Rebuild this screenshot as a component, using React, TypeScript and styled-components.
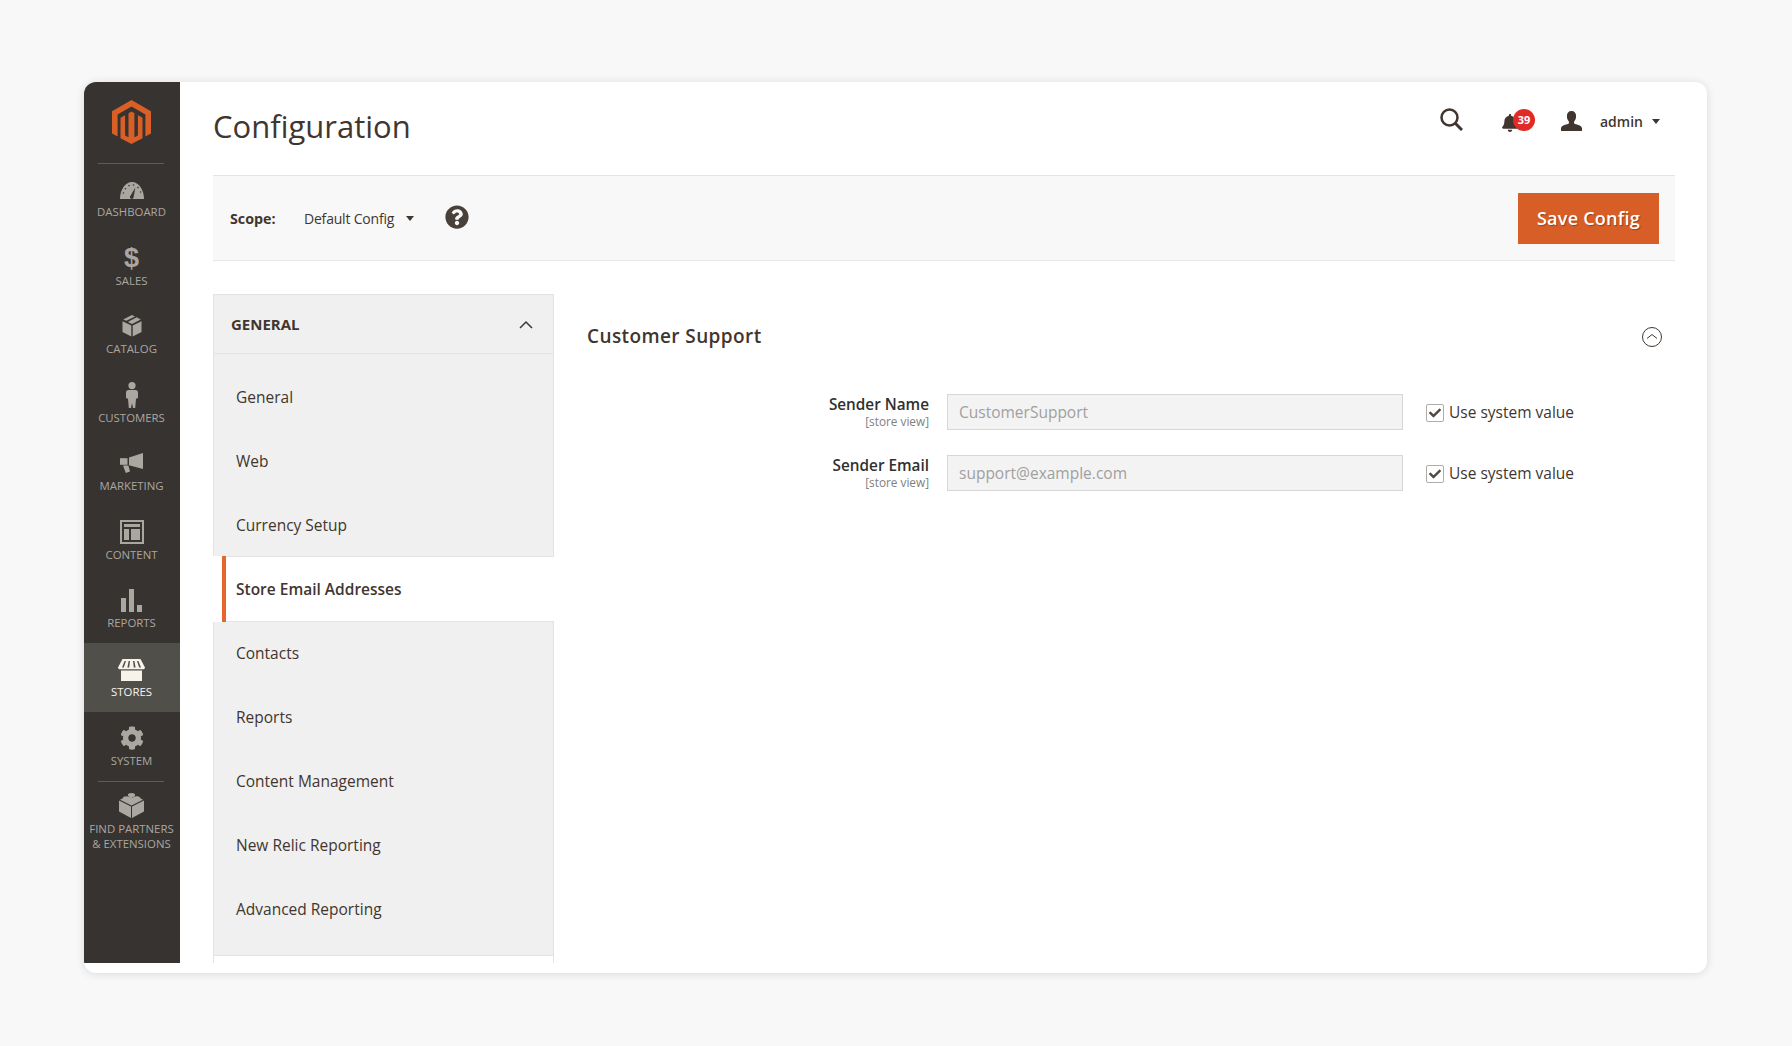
import React from "react";
import styled, { createGlobalStyle } from "styled-components";
import { FaBell, FaCheck, FaCog, FaQuestionCircle } from "react-icons/fa";

const GlobalStyle = createGlobalStyle`
  html, body {
    margin: 0;
    padding: 0;
    background: #f8f8f8;
    font-family: "Open Sans", "Liberation Sans", sans-serif;
    color: #41362f;
  }
  * { box-sizing: border-box; }
`;

const Page = styled.div`
  width: 1792px;
  height: 1046px;
  padding: 82px 85px 73px 84px;
  overflow: hidden;
`;

const Card = styled.div`
  display: flex;
  height: 891px;
  padding-bottom: 10px;
  background: #fff;
  border-radius: 12px;
  box-shadow: 0 1px 10px rgba(0, 0, 0, 0.12);
  overflow: hidden;
`;

const Sidebar = styled.nav`
  flex: 0 0 96px;
  display: flex;
  flex-direction: column;
  background: #373330;
`;

const LogoBox = styled.div`
  height: 81px;
  display: flex;
  align-items: center;
  justify-content: center;
  padding: 0 1px 1px 0;
`;

const Rule = styled.div`
  height: 1px;
  margin: 0 16px 0 14px;
  background: #5f5b57;
`;

const NavItem = styled.a<{ $active?: boolean }>`
  height: 68.57px;
  padding: 12.5px 1px 0 0;
  display: flex;
  flex-direction: column;
  align-items: center;
  background: ${(p) => (p.$active ? "#514f4a" : "transparent")};
  color: ${(p) => (p.$active ? "#f7f3eb" : "#aaa6a0")};
  &:first-of-type { margin-top: -0.5px; }
`;

const NavIcon = styled.div<{ $nudge?: number }>`
  height: 26px;
  width: 100%;
  display: flex;
  align-items: center;
  justify-content: center;
  padding-top: ${(p) => p.$nudge ?? 0}px;
  svg { display: block; fill: currentColor; }
`;

const DollarGlyph = styled.span`
  font-family: "Liberation Sans", sans-serif;
  font-weight: 700;
  font-size: 27px;
  line-height: 26px;
`;

const NavLabel = styled.span`
  margin-top: 2px;
  font-size: 11.4px;
  line-height: 15px;
  text-align: center;
  white-space: nowrap;
`;

const PartnerItem = styled(NavItem)`
  height: auto;
  padding-top: 11px;
`;

const Main = styled.main`
  flex: 1;
  min-width: 0;
  padding: 0 32px 0 33px;
  display: flex;
  flex-direction: column;
`;

const Header = styled.header`
  height: 93px;
  flex: none;
  display: flex;
  align-items: flex-start;
  justify-content: space-between;
`;

const Title = styled.h1`
  margin: 21px 0 0;
  font-size: 31px;
  line-height: 46px;
  font-weight: 400;
  color: #41362f;
`;

const Actions = styled.div`
  display: flex;
  align-items: center;
  height: 60px;
  margin: 9px 15px 0 0;
`;

const IconSlot = styled.div<{ $left?: number; $up?: number; $down?: number }>`
  position: relative;
  display: flex;
  align-items: center;
  margin-left: ${(p) => p.$left ?? 0}px;
  margin-bottom: ${(p) => p.$up ?? 0}px;
  margin-top: ${(p) => p.$down ?? 0}px;
  color: #41362f;
`;

const Badge = styled.span`
  position: absolute;
  left: 12px;
  top: -5px;
  width: 22px;
  height: 22px;
  border-radius: 50%;
  background: #e02b27;
  color: #fff;
  font-size: 11px;
  font-weight: 700;
  line-height: 22px;
  text-align: center;
`;

const UserName = styled.span`
  margin-left: 18px;
  font-size: 14px;
  font-weight: 600;
  color: #41362f;
`;

const Caret = styled.span<{ $gap: number }>`
  margin-left: ${(p) => p.$gap}px;
  width: 0;
  height: 0;
  border-left: 4.5px solid transparent;
  border-right: 4.5px solid transparent;
  border-top: 5.5px solid #41362f;
`;

const ScopeBar = styled.div`
  height: 86px;
  flex: none;
  display: flex;
  align-items: center;
  padding: 0 16px 0 17px;
  background: #f8f8f8;
  border-top: 1px solid #e3e3e3;
  border-bottom: 1px solid #e8e8e8;
`;

const ScopeLabel = styled.span`
  font-size: 14.3px;
  font-weight: 700;
  width: 74px;
`;

const ScopeValue = styled.span`
  font-size: 14px;
  color: #41362f;
  letter-spacing: -0.2px;
`;

const HelpIcon = styled(FaQuestionCircle)`
  margin: -2px 0 0 31px;
  width: 24px;
  height: 24px;
  color: #4a403a;
`;

const SaveButton = styled.button`
  margin-left: auto;
  width: 141px;
  height: 51px;
  border: 0;
  background: #d85e27;
  color: #fff;
  font-family: inherit;
  font-size: 18px;
  font-weight: 600;
  letter-spacing: 0.25px;
  text-shadow: 1px 1px 1px rgba(0, 0, 0, 0.3);
`;

const Columns = styled.div`
  flex: 1;
  min-height: 0;
  margin-top: 33px;
  display: flex;
`;

const SectionPanel = styled.aside`
  flex: 0 0 341px;
  display: flex;
  flex-direction: column;
`;

const SectionHead = styled.div`
  height: 60px;
  padding: 0 20px 0 17px;
  display: flex;
  align-items: center;
  justify-content: space-between;
  background: #f0f0f0;
  border: 1px solid #e3e3e3;
  font-size: 15px;
  font-weight: 700;
`;

const SectionList = styled.div`
  padding: 11px 0 14px;
  background: #f0f0f0;
  border: 1px solid #e3e3e3;
  border-top: 0;
`;

const SectionRow = styled.div<{ $active?: boolean }>`
  height: ${(p) => (p.$active ? 66 : 64)}px;
  margin: ${(p) => (p.$active ? "-1px -1px" : "0")};
  padding-left: ${(p) => (p.$active ? 9 : 0)}px;
  background: ${(p) => (p.$active ? "#fff" : "transparent")};
  position: relative;
`;

const SectionLink = styled.a<{ $active?: boolean }>`
  height: 100%;
  display: flex;
  align-items: center;
  padding: 0 0 1px ${(p) => (p.$active ? 10 : 22)}px;
  font-size: 15.5px;
  font-weight: ${(p) => (p.$active ? 600 : 400)};
  color: #41362f;
  ${(p) =>
    p.$active &&
    `
    border-left: 4px solid #e8652d;
    box-shadow: inset 0 1px 0 #e3e3e3, inset 0 -1px 0 #e3e3e3;
  `}
`;

const SectionTail = styled.div`
  flex: 1;
  border-left: 1px solid #e3e3e3;
  border-right: 1px solid #e3e3e3;
`;

const Content = styled.section`
  flex: 1;
  min-width: 0;
  padding: 25px 13px 0 33px;
`;

const ContentHead = styled.div`
  height: 32px;
  display: flex;
  align-items: center;
  justify-content: space-between;
  svg { margin-top: 4px; }
`;

const ContentTitle = styled.h2`
  margin: 2px 0 0;
  font-size: 19px;
  font-weight: 600;
  letter-spacing: 0.4px;
  color: #41362f;
`;

const Form = styled.div`
  margin-top: 43px;
  display: flex;
  flex-direction: column;
  gap: 25px;
`;

const Row = styled.div`
  display: grid;
  grid-template-columns: 342px 456px auto;
  column-gap: 18px;
  align-items: start;
`;

const LabelBox = styled.div`
  text-align: right;
  padding-top: 0.5px;
`;

const LabelText = styled.div`
  font-size: 15.3px;
  line-height: 18px;
  font-weight: 600;
  color: #303030;
`;

const ScopeHint = styled.div`
  margin-top: 1px;
  font-size: 11.8px;
  line-height: 15px;
  color: #808080;
`;

const ValueInput = styled.input`
  width: 100%;
  height: 36px;
  padding: 0 11px;
  background: #f3f3f3;
  border: 1px solid #d6d6d6;
  font-family: inherit;
  font-size: 15.5px;
  color: #a0a0a0;
  outline: 0;
`;

const CheckRow = styled.label`
  margin-left: 5px;
  height: 36px;
  display: flex;
  align-items: center;
  font-size: 15.5px;
  color: #41362f;
`;

const CheckBox = styled.span`
  width: 18px;
  height: 18px;
  margin: 2px 5px 0 0;
  display: flex;
  align-items: center;
  justify-content: center;
  background: #fff;
  border: 1px solid #adadad;
  border-radius: 2px;
  color: #514943;
  svg { width: 12px; height: 12px; }
`;

const Logo = () => (
  <svg width="39" height="44" viewBox="0 0 39 44" fill="#d85f26">
    <path d="M19.5 0 39 11.2v22.2l-5.6 3.2V14.5L19.5 6.5 5.6 14.5v22.1L0 33.4V11.2z" />
    <path d="M19.5 11.5 30.5 17.8v20.5l-11 5.7-11-5.7V17.8l4.6-2.6v20.2l3.4 1.9V13.2zM22.4 13.1v24.2l3.5-1.9V15.2z" fillRule="evenodd" />
  </svg>
);

const DashboardIcon = () => (
  <svg width="24" height="17" viewBox="0 0 24 17">
    <path d="M0 17C0 8 5 0 12 0s12 8 12 17z" />
    <path d="M10.2 14.2 15.4 5.5l-1.8 9.6a1.8 1.8 0 1 1-3.4-.9z" fill="#373330" />
    <g fill="#373330">
      <circle cx="3.4" cy="11" r=".8" />
      <circle cx="5.5" cy="6.8" r=".8" />
      <circle cx="9" cy="3.6" r=".8" />
      <circle cx="13.5" cy="3" r=".8" />
      <circle cx="18" cy="5.6" r=".8" />
      <circle cx="20.6" cy="10" r=".8" />
    </g>
  </svg>
);

const CatalogIcon = () => (
  <svg width="20" height="22" viewBox="0 0 20 22">
    <path d="M9.3 10.6v11L.5 17V6.2zM10.7 10.6v11l8.8-4.6V6.2z" />
    <path d="M10 0l3 1.5-8.7 4.3L1.2 4.4zM14.6 2.3l4.2 2.1-8.8 4.7-4.1-2.2z" />
  </svg>
);

const CustomerIcon = () => (
  <svg width="12" height="26" viewBox="0 0 12 26">
    <circle cx="6" cy="3.6" r="3.6" />
    <path d="M2.5 8h7c1.5 0 2.5 1 2.5 2.5V16l-2 .8L9.2 26H7l-1-5-1 5H2.8L2 16.8 0 16v-5.5C0 9 1 8 2.5 8z" />
  </svg>
);

const MarketingIcon = () => (
  <svg width="23" height="20" viewBox="0 0 23 20">
    <path d="M23 0v16L9 12.2V4.4z" />
    <path d="M0 5.2h7.5v6.6H0z" />
    <path d="M3 12.6h5.4l1.6 5.8-4.2 1.6z" />
  </svg>
);

const ContentIcon = () => (
  <svg width="24" height="24" viewBox="0 0 24 24">
    <path fillRule="evenodd" d="M0 0h24v24H0zM2 2v20h20V2z" />
    <path d="M4 4h16v3H4zM4 9h5v11H4zM11 9h9v11h-9z" />
  </svg>
);

const ReportsIcon = () => (
  <svg width="21" height="23" viewBox="0 0 21 23">
    <path d="M0 9h5v14H0zM8 0h5v23H8zM16 16h5v7h-5z" />
  </svg>
);

const StoresIcon = () => (
  <svg width="27" height="22" viewBox="0 0 27 22">
    <path fillRule="evenodd" d="M4.5 0h18L27 8.5c0 1.2-1 1.8-2 1.8H2c-1 0-2-.6-2-1.8zM6.6 2 4 8.4h1.8L8 2zM10.6 2 9.4 8.4h1.8L12 2zM15 2l.8 6.4h1.8L16.4 2zM19 2l2.2 6.4H23L20.4 2z" />
    <path d="M3 11.5h21V22H3z" />
  </svg>
);

const LegoIcon = () => (
  <svg width="25" height="25" viewBox="0 0 25 25">
    <path d="M12 13.4v11.6L0 18.6V7.4zM13 13.4v11.6l12-6.4V7.4z" />
    <path d="M12.5 12.4 1 6.8l4.2-2.2c.6 1.6 5 1.6 5.3-.2l2-1c.4 1.6 4.8 1.8 5.4.2l.6-.2L24 6.8z" />
    <ellipse cx="12.5" cy="2" rx="3.6" ry="2" />
    <ellipse cx="7.5" cy="5" rx="3.6" ry="1.8" />
    <ellipse cx="17.5" cy="5" rx="3.6" ry="1.8" />
    <ellipse cx="12.5" cy="8" rx="3.6" ry="1.8" />
  </svg>
);

const SearchIcon = () => (
  <svg width="23" height="23" viewBox="0 0 23 23" fill="none" stroke="#41362f">
    <circle cx="9.5" cy="9.5" r="8" strokeWidth="2.5" />
    <path d="M15.5 15.5 22 22" strokeWidth="3" />
  </svg>
);

const ProfileIcon = () => (
  <svg width="21" height="20" viewBox="0 0 21 20" fill="#41362f">
    <path d="M10.5 0c3 0 4.6 2 4.6 5 0 2.3-.8 4.3-2 5.4v2c1 .8 7.9 1.6 7.9 4.8V20H0v-2.8c0-3.2 6.9-4 7.9-4.800v-2c-1.200-1.100-2-3.100-2-5.400 0-3 1.600-5 4.600-5z" />
  </svg>
);

const ChevronUp = () => (
  <svg width="14" height="9" viewBox="0 0 14 9" fill="none" stroke="#41362f" strokeWidth="1.5">
    <path d="M1 8l6-6 6 6" />
  </svg>
);

const CollapseIcon = () => (
  <svg width="20" height="20" viewBox="0 0 20 20" fill="none" stroke="#41362f" strokeWidth="1">
    <circle cx="10" cy="10" r="9.5" />
    <path d="M5 11.5 10 7.5l5 4" />
  </svg>
);

const navItems: { label: string; icon: React.ReactNode; active?: boolean; nudge?: number }[] = [
  { label: "DASHBOARD", icon: <DashboardIcon />, nudge: 3 },
  { label: "SALES", icon: <DollarGlyph>$</DollarGlyph> },
  { label: "CATALOG", icon: <CatalogIcon /> },
  { label: "CUSTOMERS", icon: <CustomerIcon /> },
  { label: "MARKETING", icon: <MarketingIcon /> },
  { label: "CONTENT", icon: <ContentIcon /> },
  { label: "REPORTS", icon: <ReportsIcon /> },
  { label: "STORES", icon: <StoresIcon />, active: true, nudge: 3 },
  { label: "SYSTEM", icon: <FaCog size={24} /> },
];

const sections = [
  "General",
  "Web",
  "Currency Setup",
  "Store Email Addresses",
  "Contacts",
  "Reports",
  "Content Management",
  "New Relic Reporting",
  "Advanced Reporting",
];

const fields = [
  { label: "Sender Name", value: "CustomerSupport" },
  { label: "Sender Email", value: "support@example.com" },
];

export default function App() {
  return (
    <Page>
      <GlobalStyle />
      <Card>
        <Sidebar>
          <LogoBox>
            <Logo />
          </LogoBox>
          <Rule />
          {navItems.map((item) => (
            <NavItem key={item.label} $active={item.active}>
              <NavIcon $nudge={item.nudge}>{item.icon}</NavIcon>
              <NavLabel>{item.label}</NavLabel>
            </NavItem>
          ))}
          <Rule />
          <PartnerItem>
            <NavIcon>
              <LegoIcon />
            </NavIcon>
            <NavLabel>
              FIND PARTNERS
              <br />& EXTENSIONS
            </NavLabel>
          </PartnerItem>
        </Sidebar>
        <Main>
          <Header>
            <Title>Configuration</Title>
            <Actions>
              <IconSlot $up={3}>
                <SearchIcon />
              </IconSlot>
              <IconSlot $left={38} $down={4}>
                <FaBell size={18} />
                <Badge>39</Badge>
              </IconSlot>
              <IconSlot $left={42}>
                <ProfileIcon />
              </IconSlot>
              <UserName>admin</UserName>
              <Caret $gap={9} />
            </Actions>
          </Header>
          <ScopeBar>
            <ScopeLabel>Scope:</ScopeLabel>
            <ScopeValue>Default Config</ScopeValue>
            <Caret $gap={12} />
            <HelpIcon />
            <SaveButton>Save Config</SaveButton>
          </ScopeBar>
          <Columns>
            <SectionPanel>
              <SectionHead>
                GENERAL
                <ChevronUp />
              </SectionHead>
              <SectionList>
                {sections.map((name) => {
                  const active = name === "Store Email Addresses";
                  return (
                    <SectionRow key={name} $active={active}>
                      <SectionLink $active={active}>{name}</SectionLink>
                    </SectionRow>
                  );
                })}
              </SectionList>
              <SectionTail />
            </SectionPanel>
            <Content>
              <ContentHead>
                <ContentTitle>Customer Support</ContentTitle>
                <CollapseIcon />
              </ContentHead>
              <Form>
                {fields.map((f) => (
                  <Row key={f.label}>
                    <LabelBox>
                      <LabelText>{f.label}</LabelText>
                      <ScopeHint>[store view]</ScopeHint>
                    </LabelBox>
                    <ValueInput readOnly value={f.value} />
                    <CheckRow>
                      <CheckBox>
                        <FaCheck />
                      </CheckBox>
                      Use system value
                    </CheckRow>
                  </Row>
                ))}
              </Form>
            </Content>
          </Columns>
        </Main>
      </Card>
    </Page>
  );
}
